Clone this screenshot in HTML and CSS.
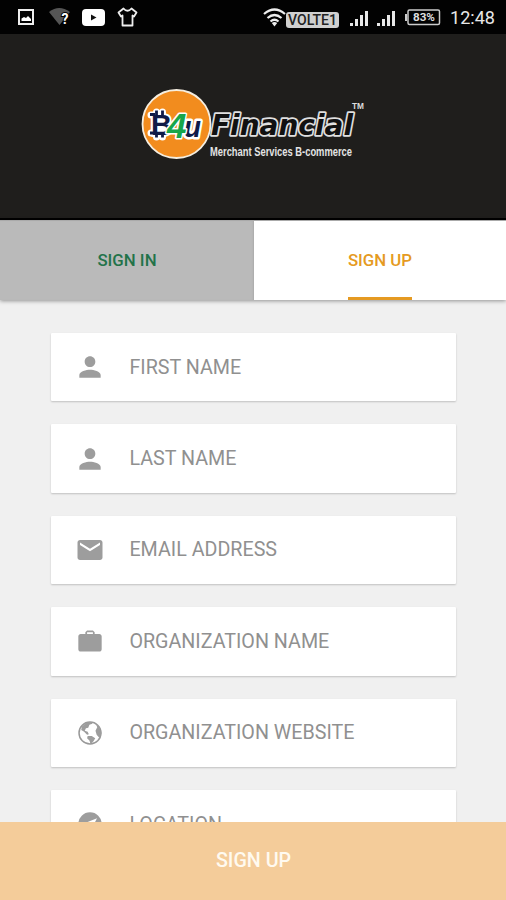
FILE: index.html
```
<!DOCTYPE html>
<html lang="en">
<head>
<meta charset="utf-8">
<title>B4u Financial - Sign up</title>
<link rel="stylesheet" href="styles.css">
</head>
<body>
<div class="screen">
  <div class="status">
    <svg class="ic-picture" width="16" height="16" viewBox="0 0 16 16"><rect x="1" y="1" width="14" height="14" fill="none" stroke="#eee" stroke-width="2"/><path d="M3.500 12V9.500L6 8l2 1 2-2 3 3v2z" fill="#fff"/></svg>
    <svg class="ic-nowifi" width="24" height="20" viewBox="0 0 24 20"><path d="M1 5Q11-3 22 5L11.500 18z" fill="#555"/><text x="13.500" y="17" class="question">?</text></svg>
    <svg class="ic-video" width="23" height="17" viewBox="0 0 23 17"><rect width="23" height="17" rx="4" fill="#fff"/><path d="M9 5.500v6l5.500-3z" fill="#111"/></svg>
    <svg class="ic-shirt" width="21" height="20" viewBox="0 0 21 20"><path d="M6.500 1.500Q10.500 6 14.500 1.500L19.500 5.500 17 9.500 15.500 8.500V18.500H5.500V8.500L4 9.500 1.500 5.500z" fill="none" stroke="#eee" stroke-width="1.800" stroke-linejoin="round"/></svg>
    <svg class="ic-wifi" width="23" height="19" viewBox="0 0 23 19"><g fill="none" stroke="#eee" stroke-width="2.200"><path d="M1 6Q11.500-3 22 6"/><path d="M4.500 10Q11.500 4 18.500 10"/><path d="M7.500 13.500Q11.500 10 15.500 13.500"/></g><path d="M8.800 15Q11.500 13 14.200 15L11.500 18.500z" fill="#eee"/></svg>
    <span class="volte"><svg width="53" height="16"><text x="2" y="13" textLength="49" lengthAdjust="spacingAndGlyphs">VOLTE1</text></svg></span>
    <svg class="ic-signal" width="19" height="17" viewBox="0 0 19 17" fill="#e8e8e8"><path d="M0 13h3v3H0zM5 9h3v7H5zM10 5h3v11h-3zM15 1h3v15h-3z"/></svg>
    <svg class="ic-signal second" width="19" height="17" viewBox="0 0 19 17" fill="#e8e8e8"><path d="M0 13h3v3H0zM5 9h3v7H5zM10 5h3v11h-3zM15 1h3v15h-3z"/></svg>
    <svg class="ic-battery" width="36" height="17" viewBox="0 0 36 17"><rect x="3" y="1" width="31.500" height="14.500" rx="1.500" fill="none" stroke="#ccc" stroke-width="1.500"/><path d="M0 5h2v7H0z" fill="#ccc"/><text x="8" y="12" textLength="22" lengthAdjust="spacingAndGlyphs">83%</text></svg>
    <svg class="clock" width="48" height="22"><text x="1" y="17" textLength="45" lengthAdjust="spacingAndGlyphs">12:48</text></svg>
  </div>
  <header class="brand">
    <svg width="232" height="80" viewBox="0 0 232 80">
      <circle cx="38.500" cy="40" r="34" fill="#f28c1e" stroke="#f5eee0" stroke-width="1.800"/>
      <path d="M18.500 28v25M24.500 28v25M13 31h6M13 49h6" stroke="#fff" stroke-width="7" stroke-linecap="round"/>
      <text x="13" y="50.500" class="b" textLength="21" lengthAdjust="spacingAndGlyphs">B</text>
      <path d="M18.500 26.500v5M24.500 26.500v5M18.500 49v4.500M24.500 49v4.500M12 30.500h5M12 49h5" stroke="#101b48" stroke-width="2.800"/>
      <text x="46" y="53" class="u" textLength="17" lengthAdjust="spacingAndGlyphs">u</text>
      <text x="29" y="54" class="four">4</text>
      <text x="73" y="51" class="name" textLength="142" lengthAdjust="spacingAndGlyphs">Financial</text>
      <text x="214" y="25" class="tm" textLength="12" lengthAdjust="spacingAndGlyphs">TM</text>
      <text x="72" y="71.500" class="tag" textLength="142" lengthAdjust="spacingAndGlyphs">Merchant Services B-commerce</text>
    </svg>
  </header>
  <nav class="tabs">
    <a class="tab inactive"><span>SIGN IN</span></a>
    <a class="tab active"><span>SIGN UP</span></a>
  </nav>
  <main class="form">
    <div class="field"><svg width="32" height="32" viewBox="0 0 24 24"><path d="M12 12c2.210 0 4-1.790 4-4s-1.790-4-4-4-4 1.790-4 4 1.790 4 4 4zm0 2c-2.670 0-8 1.340-8 4v2h16v-2c0-2.660-5.330-4-8-4z"/></svg><span>FIRST NAME</span></div>
    <div class="field"><svg width="32" height="32" viewBox="0 0 24 24"><path d="M12 12c2.210 0 4-1.790 4-4s-1.790-4-4-4-4 1.790-4 4 1.790 4 4 4zm0 2c-2.670 0-8 1.340-8 4v2h16v-2c0-2.660-5.330-4-8-4z"/></svg><span>LAST NAME</span></div>
    <div class="field"><svg width="30" height="30" viewBox="0 0 24 24"><path d="M20 4H4c-1.100 0-2 .9-2 2v12c0 1.100.9 2 2 2h16c1.100 0 2-.9 2-2V6c0-1.100-.9-2-2-2zm0 4l-8 5-8-5V6l8 5 8-5v2z"/></svg><span>EMAIL ADDRESS</span></div>
    <div class="field"><svg width="28" height="28" viewBox="0 0 24 24"><path d="M20 6h-4V4.500L14.500 3h-5L8 4.500V6H4c-1.100 0-2 .9-2 2v11c0 1.100.9 2 2 2h16c1.100 0 2-.9 2-2V8c0-1.100-.9-2-2-2zm-5.500 0h-5V4.500h5V6z"/></svg><span>ORGANIZATION NAME</span></div>
    <div class="field"><svg width="28" height="28" viewBox="0 0 24 24"><circle cx="12" cy="12" r="9.400" fill="none" stroke="#999" stroke-width="1.300"/><path d="M5 6.500L9 3l4.500-.5L14 4l-2.500 1-1 2.500-2 .5-1 2 2.500 1 1 2-1.500.5L7 11 4.500 9.500zM17 4l3 3 1.800 5-1.500 4.500-2.600-3-1-3.500 1.500-3zM10 14.500l3.500 0 3 2-1.500 2.500-2.500 2.500-1-3-2-2z"/></svg><span>ORGANIZATION WEBSITE</span></div>
    <div class="field"><svg width="28" height="28" viewBox="0 0 24 24"><path fill-rule="evenodd" d="M12 2a10 10 0 1 0 0 20 10 10 0 0 0 0-20zM18 7l-5 10-1.500-4.500L7 11.500z"/></svg><span>LOCATION</span></div>
  </main>
  <button class="submit">SIGN UP</button>
</div>
</body>
</html>
```
FILE: styles.css
```
* { box-sizing: border-box; }
body { margin: 0; font-family: Roboto, sans-serif; }
svg { display: block; flex: none; }
.screen { width: 506px; height: 900px; overflow: hidden; display: flex; flex-direction: column; background: #f0f0f0; }

.status { height: 34px; flex: none; display: flex; align-items: center; background: #020202; }
.ic-picture { margin-left: 18px; }
.ic-nowifi { margin-left: 14px; }
.ic-video { margin-left: 10px; }
.ic-shirt { margin-left: 12px; }
.ic-wifi { margin-left: 125px; }
.question { font: bold 14px Roboto, sans-serif; fill: #fff; stroke: #020202; stroke-width: 2px; paint-order: stroke; }
.volte { margin-top: 5px; width: 53px; height: 16px; background: #d0d0d0; border-radius: 3px; }
.volte text { font: 500 14px Roboto, sans-serif; fill: #222; }
.ic-signal { margin: 3px 0 0 11px; }
.ic-signal.second { margin-left: 8px; }
.ic-battery { margin-left: 9px; }
.ic-battery text { font: bold 10px Roboto, sans-serif; fill: #ddd; }
.clock { margin: 2px 0 0 8px; }
.clock text { font: 18.500px Roboto, sans-serif; fill: #e8e8e8; }

.brand { height: 186px; flex: none; padding: 50px 0 0 138px; background: #1f1e1c; border-bottom: 2px solid #000; }
.brand svg { overflow: visible; }
.brand text { font-family: "Liberation Sans", sans-serif; font-weight: bold; paint-order: stroke; stroke-linejoin: round; }
.brand .b { font-size: 29px; fill: #101b48; stroke: #fff; stroke-width: 4px; }
.brand .four { font-size: 35px; font-style: italic; fill: #18a64a; stroke: #fff; stroke-width: 3px; }
.brand .u { font-size: 29px; font-style: italic; fill: #101b48; stroke: #fff; stroke-width: 5px; }
.brand .name { font-family: "DejaVu Sans", sans-serif; font-size: 29px; font-style: italic; fill: #111; stroke: #e0e0e0; stroke-width: 3.600px; }
.brand .tm { font-size: 9px; fill: #ddd; }
.brand .tag { font-size: 12px; fill: #e4e4e4; }

.tabs { height: 80px; flex: none; display: flex; border-top: 1px solid #aaa; box-shadow: 0 1px 4px rgba(0,0,0,.4); }
.tab { flex: 1; display: flex; justify-content: center; font-size: 16.800px; font-weight: 500; line-height: 78px; }
.tab span { height: 79px; }
.inactive { flex: 0 0 254px; background: #bababa; color: #23734a; box-shadow: inset -2px 0 2px -1px #aaa; }
.active { background: #fff; color: #e59a22; }
.active span { border-bottom: 3px solid #e59a22; }

.form { flex: 1; min-height: 0; overflow: hidden; padding: 33px 50px 0 51.400px; display: flex; flex-direction: column; gap: 23px; }
.field { flex: none; height: 68.400px; display: grid; grid-template-columns: 78px 1fr; align-items: center; background: #fff; border-radius: 1px; box-shadow: 0 1px 2px rgba(0,0,0,.2); color: #909090; font-size: 19.700px; }
.field svg { justify-self: center; margin-right: 1px; fill: #9d9d9d; }
.submit { height: 78px; flex: none; border: 0; padding: 0 0 2px 1px; background: #f4cc9a; color: #fffaf0; font: 500 19.700px Roboto, sans-serif; }
```
